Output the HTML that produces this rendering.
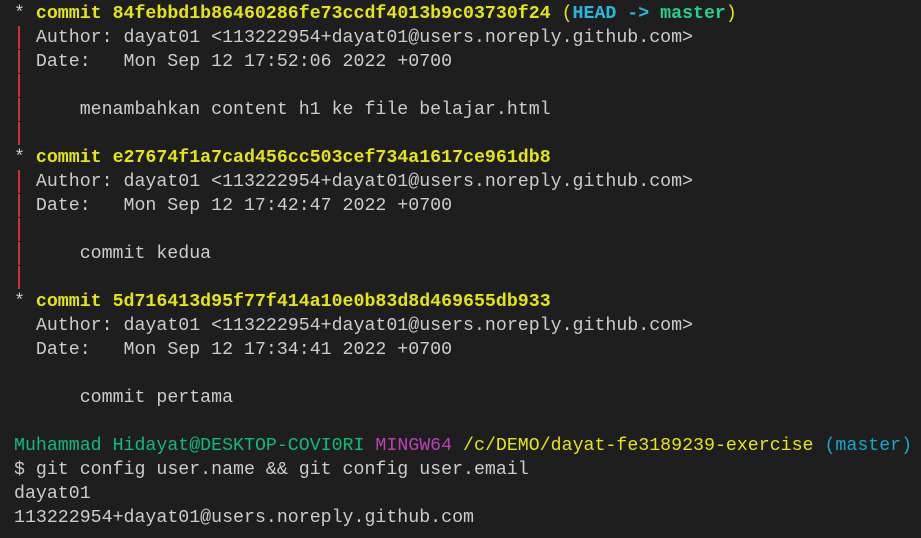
<!DOCTYPE html>
<html><head><meta charset="utf-8"><style>
html,body{margin:0;background:#1e1e1e;width:921px;height:538px;overflow:hidden}
pre{margin:0;padding:2px 0 0 14px;font-family:"Liberation Mono",monospace;font-size:18.25px;line-height:24px;color:#cccccc;white-space:pre}
.y{color:#e5e510}.yb{color:#e5e510;font-weight:bold}
.c{color:#29b8db;font-weight:bold}.g{color:#23d18b;font-weight:bold}
.gr{color:#0dbc79}.m{color:#bc3fbc}.cy{color:#11a8cd}
.b{display:inline-block;width:1ch;position:relative;height:24px;vertical-align:top}
.b::before{content:"";position:absolute;left:4px;top:0px;width:2px;height:23px;background:#cd3131}
</style></head><body><pre><span>*</span> <span class="yb">commit 84febbd1b86460286fe73ccdf4013b9c03730f24</span> <span class="y">(</span><span class="c">HEAD -&gt; </span><span class="g">master</span><span class="y">)</span>
<span class="b"></span> Author: dayat01 &lt;113222954+dayat01@users.noreply.github.com&gt;
<span class="b"></span> Date:   Mon Sep 12 17:52:06 2022 +0700
<span class="b"></span>
<span class="b"></span>     menambahkan content h1 ke file belajar.html
<span class="b"></span>
* <span class="yb">commit e27674f1a7cad456cc503cef734a1617ce961db8</span>
<span class="b"></span> Author: dayat01 &lt;113222954+dayat01@users.noreply.github.com&gt;
<span class="b"></span> Date:   Mon Sep 12 17:42:47 2022 +0700
<span class="b"></span>
<span class="b"></span>     commit kedua
<span class="b"></span>
* <span class="yb">commit 5d716413d95f77f414a10e0b83d8d469655db933</span>
  Author: dayat01 &lt;113222954+dayat01@users.noreply.github.com&gt;
  Date:   Mon Sep 12 17:34:41 2022 +0700

      commit pertama

<span class="gr">Muhammad Hidayat@DESKTOP-COVI0RI</span> <span class="m">MINGW64</span> <span class="y">/c/DEMO/dayat-fe3189239-exercise</span> <span class="cy">(master)</span>
$ git config user.name &amp;&amp; git config user.email
dayat01
113222954+dayat01@users.noreply.github.com</pre></body></html>
